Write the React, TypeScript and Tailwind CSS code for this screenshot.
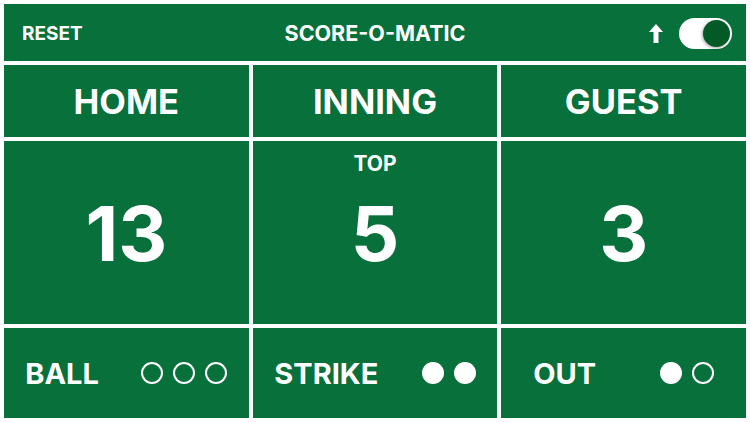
import React from "react";

const font = { fontFamily: "Inter, 'Liberation Sans', sans-serif" };

function Circles({ filled }: { filled: boolean[] }) {
  return (
    <div className="flex items-center gap-[10px]">
      {filled.map((f, i) =>
        f ? (
          <div key={i} className="w-[22px] h-[22px] rounded-full bg-white" />
        ) : (
          <div key={i} className="w-[22px] h-[22px] rounded-full border-[2px] border-white" />
        )
      )}
    </div>
  );
}

function Panel({ children, className = "" }: { children?: React.ReactNode; className?: string }) {
  return <div className={"bg-[#08703a] text-white " + className}>{children}</div>;
}

export default function App() {
  return (
    <div
      className="w-[750px] h-[422px] bg-white p-[4px] flex flex-col gap-[4px] text-white font-bold"
      style={font}
    >
      <Panel className="h-[57px] shrink-0 flex items-center justify-between pl-[18px] pr-[14px] relative">
        <span className="text-[19px] pt-[3px]">RESET</span>
        <span className="absolute left-1/2 -translate-x-1/2 top-[19px] text-[21.5px] leading-none">SCORE-O-MATIC</span>
        <div className="flex items-center gap-[16px] pt-[2px]">
          <svg width="14" height="19" viewBox="0 0 14 19">
            <polygon points="7,0 14,8 9.5,8 9.5,19 4.5,19 4.5,8 0,8" fill="white" />
          </svg>
          <div className="w-[53px] h-[31px] rounded-full bg-white flex items-center justify-end p-[2px]">
            <div className="w-[27px] h-[27px] rounded-full bg-[#035a26] shadow-[-1px_1px_3px_rgba(0,0,0,0.35)]" />
          </div>
        </div>
      </Panel>
      <div className="grid grid-cols-3 gap-[4px] h-[72px] shrink-0">
        <Panel className="flex items-center justify-center text-[34.5px] pt-[2px]">HOME</Panel>
        <Panel className="flex items-center justify-center text-[34.5px] pt-[2px]">INNING</Panel>
        <Panel className="flex items-center justify-center text-[34.5px] pt-[2px]">GUEST</Panel>
      </div>
      <div className="grid grid-cols-3 gap-[4px] h-[183px] shrink-0">
        <Panel className="flex items-center justify-center text-[76px] leading-none">13</Panel>
        <Panel className="relative flex items-center justify-center">
          <span className="absolute top-[7px] left-0 right-0 text-center text-[21px]">TOP</span>
          <span className="text-[76px] leading-none">5</span>
        </Panel>
        <Panel className="flex items-center justify-center text-[76px] leading-none">3</Panel>
      </div>
      <div className="grid grid-cols-3 gap-[4px] flex-1">
        <Panel className="flex items-center justify-around text-[29px]">
          <span className="pt-[2px]">BALL</span>
          <Circles filled={[false, false, false]} />
        </Panel>
        <Panel className="flex items-center justify-around text-[29px]">
          <span className="pt-[2px]">STRIKE</span>
          <Circles filled={[true, true]} />
        </Panel>
        <Panel className="flex items-center justify-around text-[29px]">
          <span className="pt-[2px]">OUT</span>
          <Circles filled={[true, false]} />
        </Panel>
      </div>
    </div>
  );
}
